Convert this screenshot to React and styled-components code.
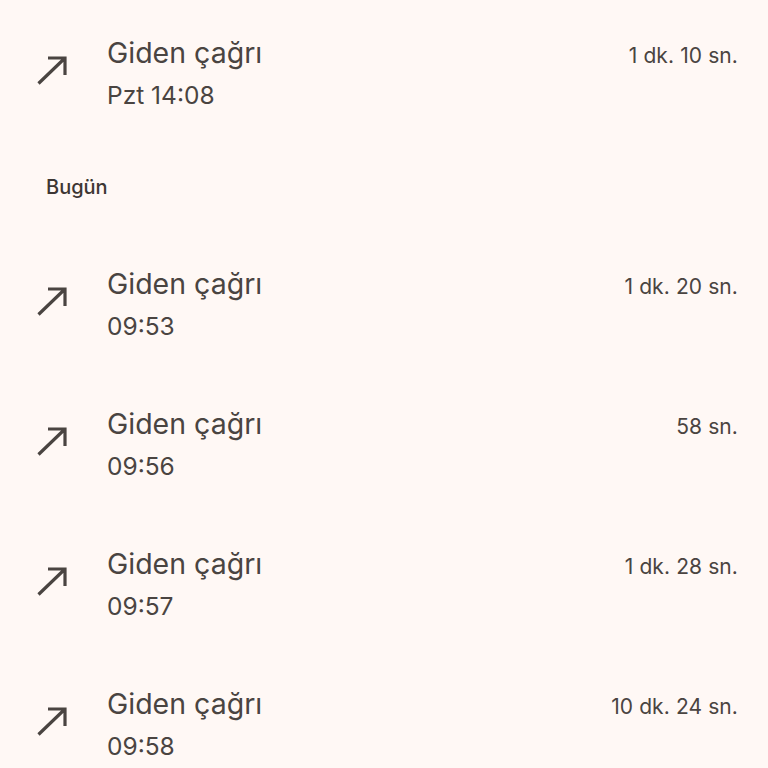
import React from 'react';
import styled, { createGlobalStyle } from 'styled-components';

const GlobalStyle = createGlobalStyle`
  html, body {
    margin: 0;
    padding: 0;
    background-color: #FFF8F5;
  }
  body {
    font-family: Inter, Roboto, sans-serif;
  }
`;

const Screen = styled.main`
  width: 768px;
  height: 768px;
  overflow: hidden;
  padding-top: 4px;
  box-sizing: border-box;
  background-color: #FFF8F5;
  color: #4A4441;
`;

const CallRow = styled.div`
  height: 140px;
  display: flex;
  align-items: center;
  padding: 0 30px 0 36px;
`;

const IconBox = styled.div`
  width: 71px;
  flex-shrink: 0;
  display: flex;
  align-items: center;
  margin-top: -8px;
`;

const Body = styled.div`
  flex: 1;
  display: flex;
  flex-direction: column;
`;

const TopLine = styled.div`
  display: flex;
  align-items: baseline;
  justify-content: space-between;
`;

const Title = styled.span`
  font-size: 28.5px;
  line-height: 42px;
`;

const Duration = styled.span`
  font-size: 21px;
  letter-spacing: 0.1px;
`;

const Time = styled.span`
  font-size: 24.5px;
  line-height: 42px;
`;

const SectionHeader = styled.div`
  height: 91px;
  padding: 31px 0 0 46px;
  box-sizing: border-box;
  font-size: 20px;
  line-height: 24px;
  font-weight: 500;
  color: #3D3633;
`;

const OutgoingIcon = () => (
  <svg width="32" height="32" viewBox="0 0 32 32" fill="none">
    <path
      d="M2.5 29.5 L29 4 M12 4 H29 V21"
      stroke="#4A4441"
      strokeWidth="3.2"
      strokeLinecap="butt"
      strokeLinejoin="miter"
    />
  </svg>
);

const calls = [
  { time: '09:53', duration: '1 dk. 20 sn.' },
  { time: '09:56', duration: '58 sn.' },
  { time: '09:57', duration: '1 dk. 28 sn.' },
  { time: '09:58', duration: '10 dk. 24 sn.' },
];

const Call = ({ time, duration }) => (
  <CallRow>
    <IconBox>
      <OutgoingIcon />
    </IconBox>
    <Body>
      <TopLine>
        <Title>Giden çağrı</Title>
        <Duration>{duration}</Duration>
      </TopLine>
      <Time>{time}</Time>
    </Body>
  </CallRow>
);

const App = () => (
  <>
    <GlobalStyle />
    <Screen>
      <Call time="Pzt 14:08" duration="1 dk. 10 sn." />
      <SectionHeader>Bugün</SectionHeader>
      {calls.map((call, index) => (
        <Call key={index} {...call} />
      ))}
    </Screen>
  </>
);

export default App;
